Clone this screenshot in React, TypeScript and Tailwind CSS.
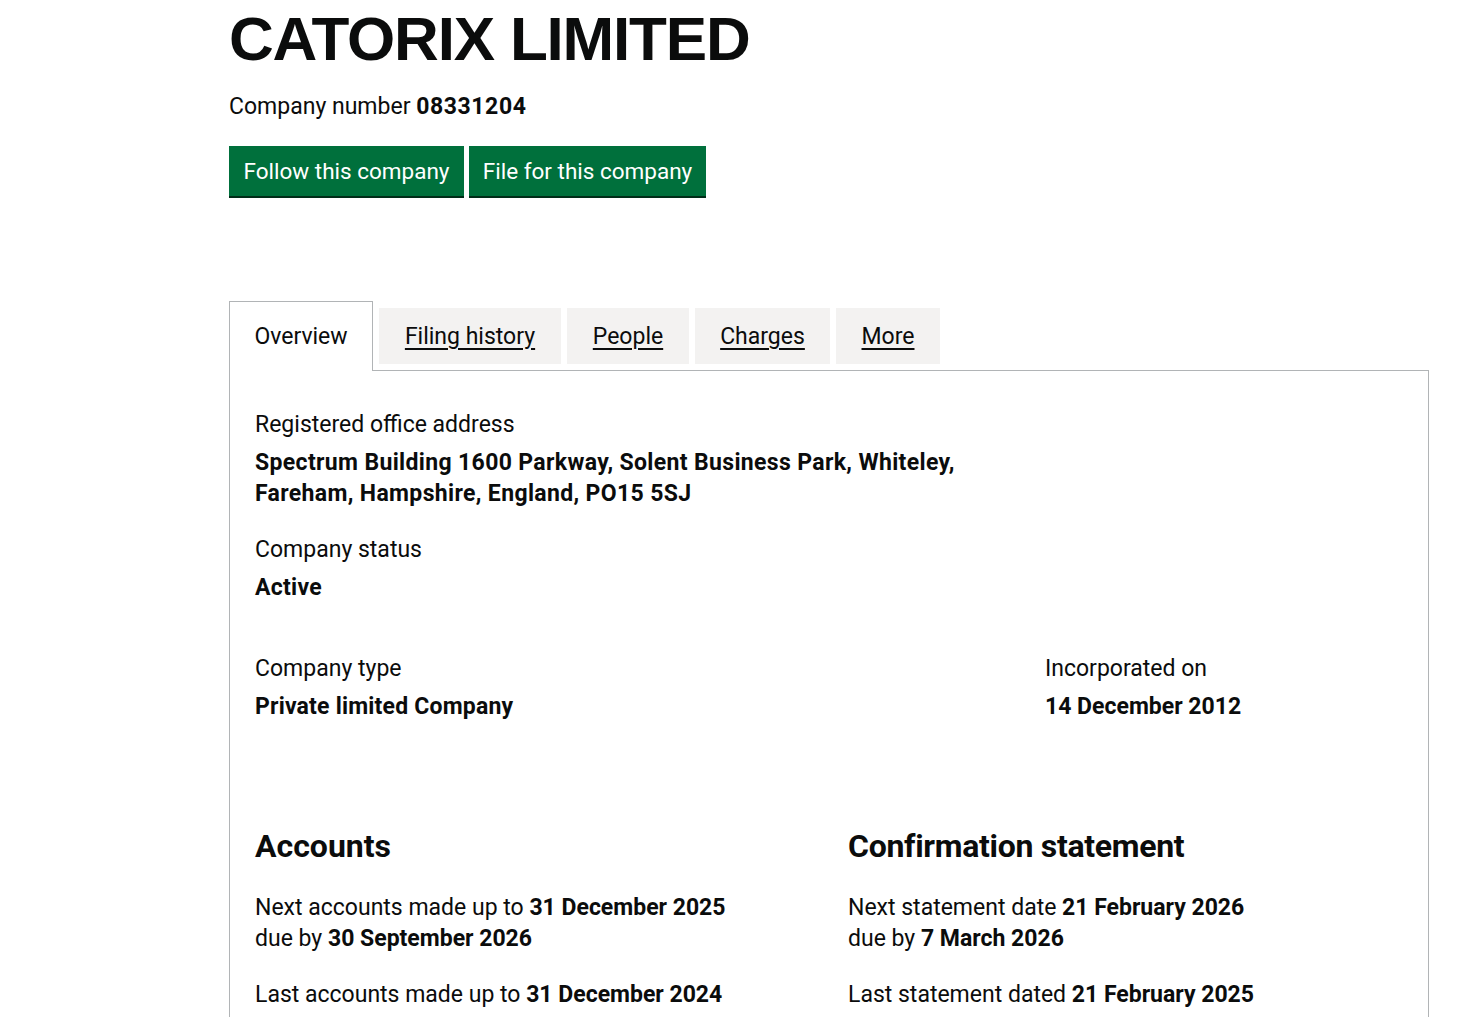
import React from "react";

const F = { fontFamily: "Roboto, 'Noto Sans', sans-serif" };

export default function App() {
  return (
    <div className="min-h-screen bg-white text-[#0b0c0c]" style={F}>
      <div className="pl-[229px] pr-[41px]">
        <h1
          className="text-[62px] font-bold leading-[78px] tracking-[-1.2px]"
          style={{ fontFamily: "'Liberation Sans', Arial, sans-serif" }}
        >
          CATORIX LIMITED
        </h1>
        <p className="mt-[14px] text-[23px] leading-[30px]">
          Company number <strong className="font-bold tracking-[0.6px]">08331204</strong>
        </p>
        <div className="mt-[24px] flex gap-[5px]">
          <button className="h-[50px] w-[235px] bg-[#00703c] text-white text-[22.5px] shadow-[0_2px_0_#002d18] leading-none">
            Follow this company
          </button>
          <button className="h-[50px] w-[237px] bg-[#00703c] text-white text-[22.5px] shadow-[0_2px_0_#002d18] leading-none">
            File for this company
          </button>
        </div>

        <div className="mt-[105px]">
          <div className="flex items-end gap-[6px] relative z-10">
            <div className="h-[70px] w-[144px] border border-b-0 border-[#b1b4b6] bg-white flex items-center justify-center text-[23px] -mb-px pt-[2px]">
              Overview
            </div>
            <a className="h-[56px] w-[182px] bg-[#f3f2f1] flex items-center justify-center text-[23px] underline underline-offset-[4px] mb-[6px] pt-[2px]">
              Filing history
            </a>
            <a className="h-[56px] w-[122px] bg-[#f3f2f1] flex items-center justify-center text-[23px] underline underline-offset-[4px] mb-[6px] pt-[2px]">
              People
            </a>
            <a className="h-[56px] w-[135px] bg-[#f3f2f1] flex items-center justify-center text-[23px] underline underline-offset-[4px] mb-[6px] pt-[2px]">
              Charges
            </a>
            <a className="h-[56px] w-[104px] bg-[#f3f2f1] flex items-center justify-center text-[23px] underline underline-offset-[4px] mb-[6px] pt-[2px]">
              More
            </a>
          </div>
          <div className="border border-[#b1b4b6] border-b-0 pl-[25px] pr-[25px] pt-[39px] pb-[40px] text-[23px]">
            <p className="leading-[30px]">Registered office address</p>
            <p className="mt-[7px] font-bold leading-[31px] tracking-[0.35px]">
              Spectrum Building 1600 Parkway, Solent Business Park, Whiteley,
              <br />
              Fareham, Hampshire, England, PO15 5SJ
            </p>
            <p className="mt-[26px] leading-[30px]">Company status</p>
            <p className="mt-[8px] font-bold leading-[30px] tracking-[0.3px]">Active</p>

            <div className="mt-[51px] grid grid-cols-[790px_1fr]">
              <div>
                <p className="leading-[30px]">Company type</p>
                <p className="mt-[8px] font-bold leading-[30px] tracking-[0.2px]">Private limited Company</p>
              </div>
              <div>
                <p className="leading-[30px]">Incorporated on</p>
                <p className="mt-[8px] font-bold leading-[30px]">14 December 2012</p>
              </div>
            </div>

            <div className="mt-[106px] grid grid-cols-[593px_1fr]">
              <div>
                <h2 className="text-[32px] font-bold leading-[36px]">Accounts</h2>
                <p className="mt-[28px] leading-[31px]">
                  Next accounts made up to <strong>31 December 2025</strong>
                  <br />
                  due by <strong>30 September 2026</strong>
                </p>
                <p className="mt-[25px] leading-[31px]">
                  Last accounts made up to <strong>31 December 2024</strong>
                </p>
              </div>
              <div>
                <h2 className="text-[32px] font-bold leading-[36px] tracking-[-0.3px]">Confirmation statement</h2>
                <p className="mt-[28px] leading-[31px]">
                  Next statement date <strong>21 February 2026</strong>
                  <br />
                  due by <strong>7 March 2026</strong>
                </p>
                <p className="mt-[25px] leading-[31px]">
                  Last statement dated <strong>21 February 2025</strong>
                </p>
              </div>
            </div>
          </div>
        </div>
      </div>
    </div>
  );
}
